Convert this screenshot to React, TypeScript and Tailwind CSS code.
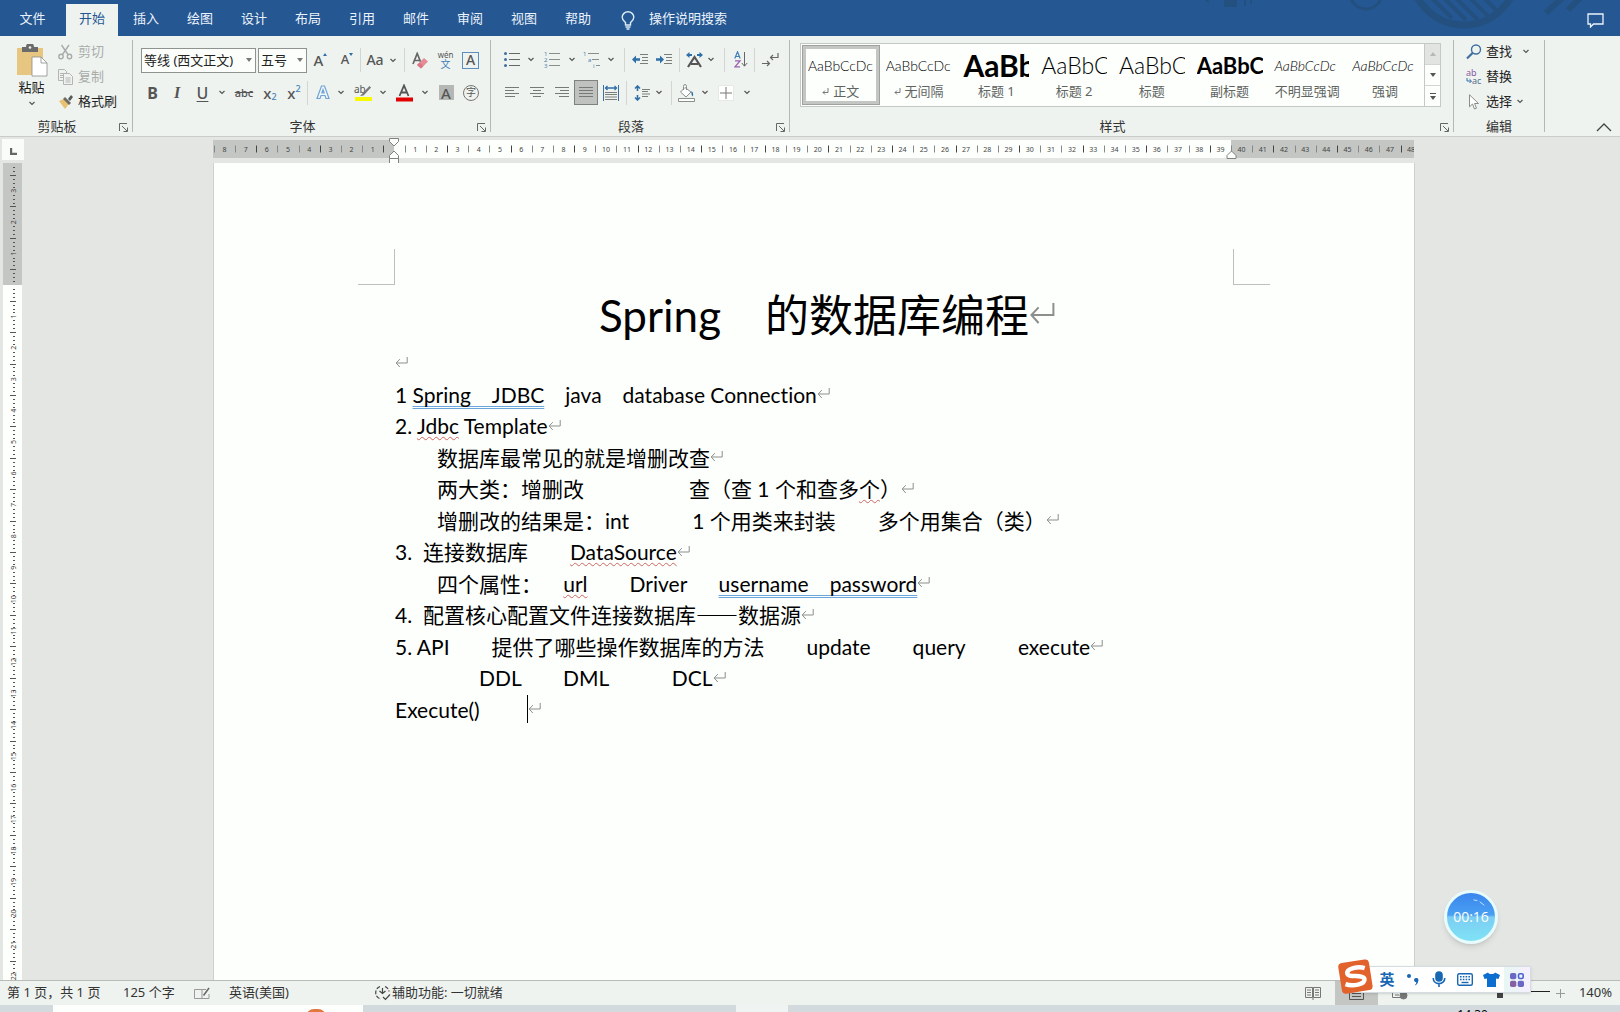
import React from 'react';
import clsx from 'clsx';

const UI_FONT = "font-['Noto_Sans','Noto_Sans_CJK_SC',sans-serif]";
const DOC_FONT = "font-['Lato','Noto_Sans_CJK_SC',sans-serif] [font-variant-ligatures:none]";

const tabs = ['开始', '插入', '绘图', '设计', '布局', '引用', '邮件', '审阅', '视图', '帮助'];

const styles = [
  { name: '正文', sample: 'AaBbCcDc', look: 'text-sm font-light', mark: true, active: true },
  { name: '无间隔', sample: 'AaBbCcDc', look: 'text-sm font-light', mark: true },
  { name: '标题 1', sample: 'AaBb', look: 'text-[30px] font-bold' },
  { name: '标题 2', sample: 'AaBbC', look: 'text-[23px] font-light' },
  { name: '标题', sample: 'AaBbC', look: 'text-[23px] font-light' },
  { name: '副标题', sample: 'AaBbC', look: 'text-[22px] font-bold' },
  { name: '不明显强调', sample: 'AaBbCcDc', look: 'text-sm font-light italic text-[#505450]' },
  { name: '强调', sample: 'AaBbCcDc', look: 'text-sm font-light italic' },
];

/* ---------- small shared pieces ---------- */

const Chevron = () => (
  <svg width="8" height="5" viewBox="0 0 8 5" fill="none" stroke="#555" strokeWidth="1.2">
    <path d="M1.5 1 4 3.5 6.5 1" />
  </svg>
);

const Drop: React.FC<{ label: string; className?: string }> = ({ label, className = 'w-3' }) => (
  <button aria-label={label} className={clsx('flex h-6 items-center justify-center', className)}>
    <Chevron />
  </button>
);

const Tool: React.FC<{ label: string; className: string; children: React.ReactNode }> = ({
  label,
  className,
  children,
}) => (
  <button aria-label={label} className={clsx('flex h-[25px] items-center justify-center', className)}>
    {children}
  </button>
);

const Sep: React.FC<{ className: string }> = ({ className }) => (
  <div className={clsx('h-6 w-px bg-[#d2d5d2]', className)} />
);

const GroupLine = () => <div className="my-1 w-px bg-[#b4b8b4]" />;

const Launcher: React.FC<{ label: string }> = ({ label }) => (
  <button aria-label={label} className="absolute right-1 bottom-1">
    <svg width="9" height="9" viewBox="0 0 9 9" fill="none" stroke="#666">
      <path d="M.5 8V.5H8M3 3l5 5M8.5 4.5v4h-4" />
    </svg>
  </button>
);

const Group: React.FC<{
  title: string;
  className?: string;
  labelClassName?: string;
  launcher?: boolean;
  children: React.ReactNode;
}> = ({ title, className, labelClassName, launcher = true, children }) => (
  <section aria-label={title} className={clsx('relative flex flex-col', className)}>
    <div className="flex-1">{children}</div>
    <div
      className={clsx('flex h-[18px] items-center justify-center text-[13px] text-[#333]', labelClassName)}
    >
      {title}
    </div>
    {launcher && <Launcher label={`${title}设置`} />}
  </section>
);

const Lines: React.FC<{ rows: [number, number][] }> = ({ rows }) => (
  <svg width="14" height="14" viewBox="0 0 14 14" stroke="#767a76">
    {rows.map(([a, b], i) => (
      <path key={i} d={`M${a} ${i * 3 + 1.5}H${b}`} />
    ))}
  </svg>
);

const Mark: React.FC<{ big?: boolean }> = ({ big }) => (
  <svg
    className={clsx('shrink-0', big ? '-mr-[26px] h-[30px] w-[26px]' : 'h-[14px] w-[13px]')}
    viewBox="0 0 13 14"
    fill="none"
    stroke="#8c8f8c"
    strokeWidth="1"
  >
    <path d="M12.2 1v6H1.2M4.8 3.2 1.2 7l3.6 4" />
  </svg>
);

/* ---------- title bar ---------- */

const TitleBar = () => (
  <header className="relative flex h-9 items-end overflow-hidden bg-[#255792] text-[13px] text-[#eaf3fb]">
    <svg
      className="absolute top-0 right-0"
      width="460"
      height="36"
      viewBox="0 0 460 36"
      fill="none"
      stroke="#24507f"
      strokeWidth="3"
    >
      <path d="M64 0h13v7H64z" fill="#24507f" stroke="none" />
      <path d="M85 0v6M91 0v4M46 0l3 2" strokeWidth="2" />
      <circle cx="206" cy="-7" r="16" />
      <circle cx="304" cy="-28" r="53" strokeWidth="7" />
      <path d="M268-6l24 24M280-6l26 26M292-6l26 26M306-6l22 22M320-6l16 16" strokeWidth="4" />
      <path d="M386 13 404-4M408 10 422-4" strokeWidth="6" />
    </svg>
    <button className="h-8 w-[65px] pb-0.5">文件</button>
    <nav className="flex">
      {tabs.map((tab, i) => (
        <button
          key={tab}
          className={clsx('mx-px h-8 w-[52px] pb-0.5', i === 0 && 'bg-[#eff3f0] text-[#255792]')}
        >
          {tab}
        </button>
      ))}
    </nav>
    <button className="ml-4 flex h-8 items-center gap-[14px]">
      <svg width="14" height="19" viewBox="0 0 14 19" fill="none" stroke="#dcecf8" strokeWidth="1.4">
        <path d="M4.5 14v-2.500C2.500 9.500 1.200 8.500 1.200 6.200a5.800 5.400 0 0 1 11.600 0c0 2.300-1.300 3.300-3.300 5.300V14zM4.500 16h5M5.500 18h3" />
      </svg>
      <span className="pb-0.5">操作说明搜索</span>
    </button>
    <button aria-label="批注" className="relative mr-4 mb-2 ml-auto">
      <svg width="17" height="15" viewBox="0 0 17 15" fill="none" stroke="#eaf3fb" strokeWidth="1.300">
        <path d="M1 1h15v10H6.500L3.500 14v-3H1z" />
      </svg>
    </button>
  </header>
);

/* ---------- ribbon ---------- */

const ClipboardGroup = () => (
  <Group title="剪贴板" className="w-[132px]" labelClassName="pr-[18px]">
    <div className="flex pt-[3px] text-[13px] whitespace-nowrap">
      <button className="flex w-[57px] shrink-0 flex-col items-center pt-[5px] pl-1.5 text-[#222]">
        <svg width="32" height="34" viewBox="0 0 32 34">
          <path d="M1 4h26v27H1z" fill="#e6c681" />
          <path d="M6 3h4a4 4 0 0 1 8 0h4v5H6z" fill="#6b6b6b" />
          <circle cx="14" cy="3.500" r="1.300" fill="#eff3f0" />
          <path d="M16 13h9l6 6v13H16z" fill="#fff" stroke="#8a8d8a" strokeWidth=".8" />
          <path d="M25 13v6h6" fill="none" stroke="#8a8d8a" strokeWidth=".8" />
        </svg>
        <span className="mt-px h-4 leading-4">粘贴</span>
        <span className="mt-1.5">
          <Chevron />
        </span>
      </button>
      <div>
        <button className="flex h-[25px] items-center gap-1 text-[#a9aca9]">
          <svg width="17" height="16" viewBox="0 0 17 16" fill="none" stroke="#a9aca9" strokeWidth="1.400">
            <path d="M4.500 1l6.500 9.500M12 1 5.500 10.500" />
            <circle cx="4" cy="12.500" r="2.200" />
            <circle cx="12.500" cy="12.500" r="2.200" />
          </svg>
          剪切
        </button>
        <button className="flex h-[25px] items-center gap-1 text-[#a9aca9]">
          <svg width="17" height="16" viewBox="0 0 17 16" fill="#eff3f0" stroke="#b2b5b2">
            <path d="M1.500.5h6l2 2v9h-8zM3 4.500h4M3 6.500h4M3 8.500h4" />
            <path d="M6.500 4.500h6l3 3v8h-9zM8.500 9h5M8.500 11h5M8.500 13h5" />
          </svg>
          复制
        </button>
        <button className="flex h-[25px] items-center gap-1 text-[#222]">
          <svg width="17" height="16" viewBox="0 0 17 16">
            <path d="M2 7l5-2 5 5-4 5z" fill="#e6c272" />
            <path d="M6 5l2-2 6 6-2 2z" fill="#6e6a60" />
            <path d="M11 5l3-4 2 2-3 4z" fill="#55595a" />
          </svg>
          格式刷
        </button>
      </div>
    </div>
  </Group>
);

const FontGroup = () => (
  <Group title="字体" className="w-[357px] pl-2" labelClassName="pr-[26px]">
    <div className="flex flex-col gap-[7px] pt-[11px] text-[#555]">
      <div className="flex items-center">
        <div className="relative mr-0.5">
          <select
            aria-label="字体"
            className="h-[25px] w-[115px] appearance-none border border-[#8f938f] bg-[#fcfefc] pl-0.5 text-[13px] text-[#222]"
          >
            <option>等线 (西文正文)</option>
          </select>
          <svg className="pointer-events-none absolute top-[11px] right-1" width="6" height="4">
            <path d="M0 0h6L3 4z" fill="#777" />
          </svg>
        </div>
        <div className="relative">
          <select
            aria-label="字号"
            className="h-[25px] w-[49px] appearance-none border border-[#8f938f] bg-[#fcfefc] pl-0.5 text-[13px] text-[#222]"
          >
            <option>五号</option>
          </select>
          <svg className="pointer-events-none absolute top-[11px] right-1" width="6" height="4">
            <path d="M0 0h6L3 4z" fill="#777" />
          </svg>
        </div>
        <Tool label="增大字号" className="w-[27px] text-[15px] font-medium">
          A
          <svg className="mb-3" width="4" height="3">
            <path d="M0 3 2 0l2 3z" fill="#2f6fa8" />
          </svg>
        </Tool>
        <Tool label="减小字号" className="w-[26px] text-[13px] font-medium">
          A
          <svg className="mb-3" width="4" height="3">
            <path d="M0 0h4L2 3z" fill="#2f6fa8" />
          </svg>
        </Tool>
        <Sep className="mr-0.5" />
        <Tool label="更改大小写" className="w-6 text-sm font-medium">
          Aa
        </Tool>
        <Drop label="大小写选项" />
        <Sep className="mr-[3px] ml-[5px]" />
        <Tool label="清除所有格式" className="w-[25px]">
          <svg width="17" height="17" viewBox="0 0 17 17">
            <path d="M1 12 5.200 1.500 9.500 12M2.500 8.500H8" fill="none" stroke="#666" strokeWidth="1.700" />
            <path d="M5 13l7-7 4 3.500-7 7z" fill="#e58a97" />
            <path d="M5 13l2.500-2.500 4 3.500L9 16.500z" fill="#d97585" />
          </svg>
        </Tool>
        <Tool label="拼音指南" className="w-[25px]">
          <span className="flex flex-col items-center">
            <span className="text-[8px] leading-[8px]">wén</span>
            <span className="text-[10px] leading-[10px] text-[#3e7fb8]">文</span>
          </span>
        </Tool>
        <Tool label="字符边框" className="w-[25px]">
          <span className="flex h-[17px] w-[17px] items-center justify-center border border-[#5b8fc0] text-sm leading-4 font-medium">
            A
          </span>
        </Tool>
      </div>
      <div className="flex items-center text-base">
        <Tool label="加粗" className="w-[23px] font-bold">
          B
        </Tool>
        <Tool label="倾斜" className="w-[26px] font-['Liberation_Serif',serif] font-bold italic">
          I
        </Tool>
        <Tool label="下划线" className="w-[25px] font-medium underline underline-offset-2">
          U
        </Tool>
        <Drop label="下划线样式" className="w-3.5" />
        <Tool label="删除线" className="w-[30px] text-[11px] font-medium line-through">
          abc
        </Tool>
        <Tool label="下标" className="w-[22px] text-[15px] font-medium">
          x<span className="mt-2 text-[9px] text-[#3e7fb8]">2</span>
        </Tool>
        <Tool label="上标" className="w-[26px] text-[15px] font-medium">
          x<span className="mb-2 text-[9px] text-[#3e7fb8]">2</span>
        </Tool>
        <Sep className="mr-[3px]" />
        <Tool label="文本效果" className="w-6">
          <svg width="14" height="15" viewBox="0 0 14 15" fill="#f5f9fc" stroke="#6fa3d3" strokeWidth="1.200">
            <path d="M1 13.500 5.500 1h3L13 13.500h-3L9 10.500H5L4 13.500zM5.800 8h2.400L7 4.500z" />
          </svg>
        </Tool>
        <Drop label="文本效果选项" />
        <Tool label="突出显示" className="w-8">
          <svg width="18" height="18" viewBox="0 0 18 18">
            <text x="0" y="9" fontSize="10" fill="#555">
              ab
            </text>
            <path d="M15.500 2 17 3.500 9.500 11.500 6 12z" fill="#777" />
            <path d="M1 13h17v4H1z" fill="#f8f800" />
          </svg>
        </Tool>
        <Drop label="突出显示颜色" className="w-2" />
        <Tool label="字体颜色" className="w-[34px]">
          <svg width="18" height="18" viewBox="0 0 18 18">
            <path d="M4.500 12 9 1.500 13.500 12M6 8.500h6" fill="none" stroke="#555" strokeWidth="1.800" />
            <path d="M1 13.500h17v4H1z" fill="#e00000" />
          </svg>
        </Tool>
        <Drop label="字体颜色选项" className="w-2" />
        <Tool label="字符底纹" className="w-[34px] font-medium">
          <span className="flex h-[15px] w-[15px] items-center justify-center bg-[#b4b7b4] text-[15px]">A</span>
        </Tool>
        <Tool label="带圈字符" className="w-4">
          <span className="flex h-4 w-4 shrink-0 items-center justify-center rounded-full border border-[#777] text-[10px]">
            字
          </span>
        </Tool>
      </div>
    </div>
  </Group>
);

const ParagraphGroup = () => (
  <Group title="段落" className="w-[298px] pl-2" labelClassName="pr-[26px]">
    <div className="flex flex-col gap-2 pt-[11px] text-[#555]">
      <div className="flex items-center">
        <Tool label="项目符号" className="w-[26px]">
          <svg width="16" height="17" viewBox="0 0 16 17" stroke="#666">
            <path d="M5 2.500h11M5 8.500h11M5 14.500h11" />
            <g fill="#3e6f9e" stroke="none">
              <circle cx="1.500" cy="2.500" r="1.500" />
              <circle cx="1.500" cy="8.500" r="1.500" />
              <circle cx="1.500" cy="14.500" r="1.500" />
            </g>
          </svg>
        </Tool>
        <Drop label="项目符号库" />
        <Tool label="编号" className="w-[29px]">
          <svg width="16" height="17" viewBox="0 0 16 17">
            <path d="M5 2.500h11M5 8.500h11M5 14.500h11" stroke="#8a8e8a" />
            <g fill="#4a7fae" fontSize="6">
              <text x="0" y="5">1</text>
              <text x="0" y="11">2</text>
              <text x="0" y="17">3</text>
            </g>
          </svg>
        </Tool>
        <Drop label="编号库" />
        <Tool label="多级列表" className="w-[27px]">
          <svg width="17" height="17" viewBox="0 0 17 17">
            <path d="M5 2.500h11M9 8.500h7M13 14.500h4" stroke="#8a8e8a" />
            <g fill="#4a7fae" fontSize="6">
              <text x="0" y="5">1</text>
              <text x="5" y="11">a</text>
              <text x="10" y="17">i</text>
            </g>
          </svg>
        </Tool>
        <Drop label="列表库" />
        <Sep className="mr-[3px] ml-[7px]" />
        <Tool label="减少缩进量" className="w-6">
          <svg width="16" height="11" viewBox="0 0 16 11">
            <path d="M8 .5h8M10 3.500h6M10 6.500h6M8 9.500h8" stroke="#7a7e7a" />
            <path d="M0 5.500 4 1.500v2.800h4v2.400H4v2.800z" fill="#2f6fa8" />
          </svg>
        </Tool>
        <Tool label="增加缩进量" className="w-6">
          <svg width="16" height="11" viewBox="0 0 16 11">
            <path d="M8 .5h8M10 3.500h6M10 6.500h6M8 9.500h8" stroke="#7a7e7a" />
            <path d="M8 5.500 4 1.500v2.800H0v2.400h4v2.800z" fill="#2f6fa8" />
          </svg>
        </Tool>
        <Sep className="mx-[3px]" />
        <Tool label="中文版式" className="w-[22px]">
          <svg width="17" height="16" viewBox="0 0 17 16">
            <path d="M2 15 8.500 5 15 15M5 12h7" fill="none" stroke="#555" strokeWidth="2.200" />
            <path d="M0 3l3.500-3v2H6v2H3.500v2zM17 3l-3.500-3v2H11v2h2.500v2z" fill="#2f6fa8" />
          </svg>
        </Tool>
        <Drop label="中文版式选项" />
        <Sep className="mr-[3px] ml-[7px]" />
        <Tool label="排序" className="w-[25px]">
          <svg width="14" height="17" viewBox="0 0 14 17" fill="none">
            <path d="M.8 7.500 3.500.8l2.700 6.700M1.800 5.500h3.400" stroke="#3e7fb8" strokeWidth="1.200" />
            <path d="M1 9.800h5L1 15.800h5" stroke="#9a62ae" strokeWidth="1.300" />
            <path d="M10.500 1v14M7.800 12l2.700 3.200 2.700-3.200" stroke="#666" />
          </svg>
        </Tool>
        <Sep className="mr-[3px] ml-px" />
        <Tool label="显示编辑标记" className="w-6">
          <svg width="17" height="15" viewBox="0 0 17 15" fill="none" stroke="#666" strokeWidth="1.200">
            <path d="M16 1v4.500H8.500M11 3 8.500 5.500 11 8M0 11.500h7.500M5 9l2.500 2.500L5 14" />
          </svg>
        </Tool>
      </div>
      <div className="flex items-center pl-px">
        <Tool label="左对齐" className="w-6">
          <Lines rows={[[0, 14], [0, 9], [0, 14], [0, 10]]} />
        </Tool>
        <Tool label="居中" className="w-[25px]">
          <Lines rows={[[0, 14], [3, 11], [0, 14], [3, 11]]} />
        </Tool>
        <Tool label="右对齐" className="w-[25px]">
          <Lines rows={[[0, 14], [5, 14], [0, 14], [4, 14]]} />
        </Tool>
        <Tool label="两端对齐" className="w-6 border border-[#7f837f] bg-[#bfc2bf]">
          <Lines rows={[[0, 14], [0, 14], [0, 14], [0, 14]]} />
        </Tool>
        <Tool label="分散对齐" className="w-[26px]">
          <svg width="16" height="16" viewBox="0 0 16 16" fill="none">
            <path d="M.5 0v16M15.500 0v16" stroke="#3e6f9e" />
            <path d="M2 3h12M4.500 1 2.500 3l2 2M11.500 1l2 2-2 2" stroke="#2f6fa8" strokeWidth="1.300" />
            <path d="M2 7.500h12M2 9.500h12M2 12h12M2 14.500h12" stroke="#7a7e7a" />
          </svg>
        </Tool>
        <Sep className="mr-[3px] ml-0.5" />
        <Tool label="行距" className="w-[23px]">
          <svg width="16" height="16" viewBox="0 0 16 16" fill="none">
            <path d="M3.500 1v5M1 3.500 3.500 1 6 3.500M3.500 15v-5M1 12.500 3.500 15 6 12.500" stroke="#2f6fa8" strokeWidth="1.600" />
            <path d="M8 4.500h8M8 6.500h6M8 9h8M8 11.500h6" stroke="#7a7e7a" />
          </svg>
        </Tool>
        <Drop label="行距选项" />
        <Sep className="mr-0.5 ml-1.5" />
        <Tool label="底纹" className="w-[25px]">
          <svg width="17" height="18" viewBox="0 0 17 18" fill="#fff" stroke="#8a8e8a">
            <path d="M7 3.500 13 8l-5 5-5.500-5zM5.500 6V2.500a1.500 2 0 0 1 3 0V6" />
            <path d="M13.500 7c2 1.500 2 4 1 5.500-.8-1-1.500-3-1-5.500z" fill="#2f6fa8" stroke="none" />
            <path d="M.5 14.500h16v3H.5z" />
          </svg>
        </Tool>
        <Drop label="底纹颜色" />
        <Tool label="边框" className="w-[30px]">
          <svg width="16" height="16" viewBox="0 0 16 16">
            <path d="M0 0h16v16H0z" fill="#fff" />
            <path d="M8 2v12M2 8h12" stroke="#777" />
            <path d="M.5.5h15v15H.5z" fill="none" stroke="#cfd2cf" strokeDasharray="1 1" />
          </svg>
        </Tool>
        <Drop label="边框选项" />
      </div>
    </div>
  </Group>
);

const StylesGroup = () => (
  <Group title="样式" className="w-[663px] pr-3 pl-[10px]" labelClassName="pr-4">
    <div className="pt-[7px]">
      <div className="flex h-16 border border-[#c5c9c5] bg-[#fdfffd]">
        <div className="flex flex-1 pt-px pl-px">
          {styles.map((s) => (
            <button
              key={s.name}
              className={clsx(
                'flex h-[60px] w-0 flex-1 flex-col items-center border-4',
                s.active ? 'border-[#c3c6c3] outline outline-1 -outline-offset-1 outline-[#9fa29f]' : 'border-transparent',
              )}
            >
              <span
                className={clsx(
                  'h-[33px] w-[66px] overflow-hidden text-left leading-[33px] whitespace-nowrap text-black',
                  DOC_FONT,
                  s.look,
                )}
              >
                {s.sample}
              </span>
              <span className="flex h-[18px] items-center gap-1 text-[13px] leading-[18px] whitespace-nowrap text-[#606460]">
                {s.mark && (
                  <svg width="7" height="7" viewBox="0 0 7 7" fill="none" stroke="#777">
                    <path d="M6 0v4.500H1M3 2.500l-2 2 2 2" />
                  </svg>
                )}
                {s.name}
              </span>
            </button>
          ))}
        </div>
        <div className="flex w-4 flex-col divide-y divide-[#d2d5d2] border-l border-[#c5c9c5]">
          <button aria-label="上一行" className="flex flex-1 items-center justify-center bg-[#e2e4e2]">
            <svg width="6" height="4">
              <path d="M0 4 3 0l3 4z" fill="#b5b8b5" />
            </svg>
          </button>
          <button aria-label="下一行" className="flex flex-1 items-center justify-center">
            <svg width="6" height="4">
              <path d="M0 0h6L3 4z" fill="#555" />
            </svg>
          </button>
          <button aria-label="其他样式" className="flex flex-1 items-center justify-center">
            <svg width="6" height="7">
              <path d="M0 0h6v1H0zM0 3h6L3 7z" fill="#555" />
            </svg>
          </button>
        </div>
      </div>
    </div>
  </Group>
);

const EditGroup = () => (
  <Group title="编辑" className="w-[90px]" launcher={false}>
    <div className="pt-[3px] pl-3 text-[13px] text-[#222]">
      <button className="flex h-[25px] items-center gap-1">
        <svg width="16" height="16" viewBox="0 0 16 16" fill="none" stroke="#3e6f9e" strokeWidth="1.400">
          <circle cx="10" cy="5.500" r="4.500" />
          <path d="M6.800 8.800 1 14.500" strokeWidth="2.200" />
        </svg>
        查找
        <span className="pl-1.5">
          <Chevron />
        </span>
      </button>
      <button className="flex h-[25px] items-center gap-1">
        <svg width="16" height="16" viewBox="0 0 16 16">
          <text x="0" y="7" fontSize="9" fill="#8a5aa5">
            ab
          </text>
          <text x="6" y="15" fontSize="9" fill="#55708c">
            ac
          </text>
          <path d="M1 9v3h4M3.500 10.200 5.500 12l-2 2" fill="none" stroke="#2f6fa8" />
        </svg>
        替换
      </button>
      <button className="flex h-[25px] items-center gap-1">
        <svg width="16" height="16" viewBox="0 0 16 16" fill="#fff" stroke="#8a8e8a">
          <path d="M3.500.8v12l3-2.800 2 5 2-.8-2-4.700h4z" />
        </svg>
        选择
        <Chevron />
      </button>
    </div>
  </Group>
);

const Ribbon = () => (
  <div className="flex h-[101px] border-b border-[#c9ccc9] bg-[#eff3f0]">
    <ClipboardGroup />
    <GroupLine />
    <FontGroup />
    <GroupLine />
    <ParagraphGroup />
    <GroupLine />
    <StylesGroup />
    <GroupLine />
    <EditGroup />
    <GroupLine />
    <button aria-label="折叠功能区" className="mr-2 mb-1 ml-auto self-end">
      <svg width="16" height="10" viewBox="0 0 16 10" fill="none" stroke="#444" strokeWidth="1.300">
        <path d="M1 9 8 2l7 7" />
      </svg>
    </button>
  </div>
);

/* ---------- rulers ---------- */

const STEP = 21.19;
const ZERO = 181;

const HorizontalRuler = () => {
  const units = Array.from({ length: 57 }, (_, i) => i - 8);
  return (
    <svg className="w-[1201px] shrink-0" height="26" viewBox="0 0 1201 26">
      <path d="M0 3h1201v18H0z" fill="#c3c6c3" />
      <path d="M181 3h837v18H181z" fill="#fdfffd" />
      {units.map((n) => (
        <React.Fragment key={n}>
          {n !== 0 && (
            <text x={ZERO + n * STEP} y="14.500" fontSize="7" textAnchor="middle" fill="#444">
              {Math.abs(n)}
            </text>
          )}
          <path
            d={`M${Math.round(ZERO + (n - 0.5) * STEP) + 0.5} 8.500v7`}
            stroke={n % 3 === 0 ? '#444' : '#888'}
          />
        </React.Fragment>
      ))}
      <g fill="#fdfffd" stroke="#7f837f">
        <path d="M177 1.500h8.500v3L181 9l-4.500-4.500v-3zM181 14l4.500 4.500v3h-9v-3zM176.500 21.500h9v5h-9z" />
        <path d="M1018.500 14l4.500 4.500v3h-9v-3z" />
      </g>
    </svg>
  );
};

const VSTEP = 31.42;
const VZERO = 122;

const VerticalRuler = () => {
  const ticks = Array.from({ length: 212 }, (_, i) => i - 31);
  return (
    <svg className="ml-[3px] w-[19px] shrink-0 self-start" height="1200" viewBox="0 0 19 1200">
      <path d="M0 0h19v1200H0z" fill="#fdfffd" />
      <path d="M0 0h19v122H0z" fill="#c3c6c3" />
      {ticks.map((t) => {
        const y = VZERO + (t * VSTEP) / 8;
        if (y < 2 || t === 0) return null;
        if (t % 8 === 0) {
          return (
            <text
              key={t}
              fontSize="7"
              textAnchor="middle"
              fill="#444"
              transform={`translate(13 ${y}) rotate(-90)`}
            >
              {Math.abs(t / 8)}
            </text>
          );
        }
        const row = Math.round(y) + 0.5;
        return <path key={t} d={t % 4 === 0 ? `M7 ${row}h6` : `M10 ${row}h2`} stroke="#555" />;
      })}
    </svg>
  );
};

/* ---------- document ---------- */

const Wavy: React.FC<{ children: React.ReactNode }> = ({ children }) => (
  <span className="underline decoration-[#d0655f] decoration-wavy decoration-1 underline-offset-2">{children}</span>
);

const Grammar: React.FC<{ children: React.ReactNode }> = ({ children }) => (
  <span className="underline decoration-[#6aa5dc] decoration-double decoration-1 underline-offset-[3px] [text-decoration-skip-ink:none]">
    {children}
  </span>
);

const lines: React.ReactNode[] = [
  <>1 <Grammar>Spring　JDBC</Grammar>　java　database Connection</>,
  <>2. <Wavy>Jdbc</Wavy> Template</>,
  <>　　数据库最常见的就是增删改查</>,
  <>　　两大类：增删改　　　　　查（查 1 个和查多<Wavy>个</Wavy>）</>,
  <>　　增删改的结果是：int　　　1 个用类来封装　　多个用集合（类）</>,
  <>3.  连接数据库　　<Wavy>DataSource</Wavy></>,
  <>　　四个属性：　  <Wavy>url</Wavy>　　Driver　  <Grammar>username　password</Grammar></>,
  <>4.  配置核心配置文件连接数据库<span className="font-['Noto_Sans_CJK_SC',sans-serif]">——</span>数据源</>,
  <>5. API　　提供了哪些操作数据库的方法　　update　　query　　  execute</>,
  <>　　　　DDL　　DML　　　DCL</>,
];

const Page = () => (
  <article className="w-[1200px] shrink-0 bg-[#fdfffd] pt-[86px] text-black outline outline-1 outline-[#cdd0cd]">
    <div className="flex justify-between px-36">
      <div className="h-9 w-[37px] border-r border-b border-[#bdc0bd]" />
      <div className="h-9 w-[37px] border-b border-l border-[#bdc0bd]" />
    </div>
    <div className={clsx('px-[181px]', DOC_FONT)} lang="zh-CN">
      <h1 className="flex h-[62px] items-center justify-center pb-0.5 text-[44px] whitespace-pre">
        Spring　的数据库编程
        <Mark big />
      </h1>
      <div className="grid h-[378px] auto-rows-fr">
        <p className="flex items-center">
          <Mark />
        </p>
        {lines.map((line, i) => (
          <p key={i} className="flex items-center text-[21px] leading-[31px] whitespace-pre">
            <span>{line}</span>
            <Mark />
          </p>
        ))}
        <p className="flex items-center text-[21px] leading-[31px] whitespace-pre">
          <span>Execute()　　 </span>
          <span className="h-7 w-px bg-black" />
          <Mark />
        </p>
      </div>
    </div>
  </article>
);

/* ---------- status bar and floating tools ---------- */

const StatusBar = () => (
  <footer className="flex h-[25px] shrink-0 items-center border-t border-[#b9bcb9] bg-[#eff3f0] pr-2 pl-[7px] text-[13px] whitespace-pre text-[#333]">
    <span className="w-[116px] pb-px">第 1 页，共 1 页</span>
    <span className="w-[71px] pb-px">125 个字</span>
    <svg width="16" height="13" viewBox="0 0 16 13" fill="none" stroke="#999">
      <path d="M8 2.500H.5v9H8zM8 2.500h4M8 11.500h7V7" />
      <path d="M15 1 9.500 8.500" stroke="#666" strokeWidth="1.500" />
    </svg>
    <span className="ml-[19px] w-[146px] pb-px">英语(美国)</span>
    <svg width="16" height="16" viewBox="0 0 16 16" fill="none" stroke="#444" strokeWidth="1.200">
      <path d="M5 1.500a6.500 6.500 0 0 0 1 12.500M10 1.500a6.500 6.500 0 0 1 4 5" strokeDasharray="4 1.500" />
      <path d="M7.500 3v5M4.500 6l3 2.500 3-2.500M8 12l2.500 2.500L15 9.500" />
    </svg>
    <span className="pb-px pl-px">辅助功能: 一切就绪</span>
    <div className="ml-auto flex h-full items-center">
      <button aria-label="阅读视图" className="mr-[14px]">
        <svg width="16" height="14" viewBox="0 0 16 14" fill="none" stroke="#777">
          <path d="M.5 1.500h7v10h-7zM8.500 1.500h7v10h-7zM8 1v13M2 4h4M2 6.500h4M2 9h4M10 4h4M10 6.500h4M10 9h4" />
        </svg>
      </button>
      <button aria-label="页面视图" className="flex h-full w-[43px] items-center justify-center bg-[#c3c6c3]">
        <svg width="15" height="13" viewBox="0 0 15 13" fill="none" stroke="#555">
          <path d="M.5.5h14v12H.5zM3 3.500h9M3 6.500h9M3 9.500h9" />
        </svg>
      </button>
      <button aria-label="Web 版式" className="mr-3 ml-[14px]">
        <svg width="16" height="14" viewBox="0 0 16 14" fill="none" stroke="#777">
          <path d="M.5.5h12v11H.5zM3 3.500h7M3 6.500h5M3 9h4" />
          <circle cx="11.500" cy="9.500" r="3.500" fill="#777" />
        </svg>
      </button>
      <input
        type="range"
        aria-label="缩放"
        min={0}
        max={100}
        defaultValue={62}
        className="mb-1 h-[14px] w-[130px] appearance-none bg-[linear-gradient(#222,#222)] bg-[length:100%_1px] bg-center bg-no-repeat [&::-webkit-slider-thumb]:h-[14px] [&::-webkit-slider-thumb]:w-1.5 [&::-webkit-slider-thumb]:appearance-none [&::-webkit-slider-thumb]:bg-[#444]"
      />
      <button aria-label="放大" className="mr-[13px] ml-[6px]">
        <svg width="9" height="9" stroke="#999">
          <path d="M4.500 0v9M0 4.500h9" />
        </svg>
      </button>
      <span className="w-[34px] pb-px text-right">140%</span>
    </div>
  </footer>
);

const Taskbar = () => (
  <div className="flex h-[7px] shrink-0 overflow-hidden bg-[#d2dade]">
    <div className="ml-[53px] flex w-[310px] justify-end bg-[#fdfffd] pr-[37px]">
      <div className="mt-1 h-4 w-5 rounded-full bg-[#e07840]" />
    </div>
    <div className="ml-[373px] w-[52px] bg-[#eff3f2]" />
    <span className="mt-1 mr-[132px] ml-auto text-xs leading-3 text-black">14:30</span>
  </div>
);

const Timer = () => (
  <div className="absolute right-[122px] bottom-[68px] flex h-[54px] w-[54px] items-center justify-center rounded-full border-[3px] border-[#e8fbfd] bg-[linear-gradient(#3a86ee_0%,#4aa0f2_46%,#7ccdf3_50%,#7ee3f5_100%)] font-['Open_Sans',sans-serif] text-sm text-white shadow-md">
    00:16
    <svg className="absolute top-1 right-2" width="14" height="10" fill="none" stroke="#c5e2ff" strokeLinecap="round">
      <path d="M1 3l3 .5M7 5l4 3" />
    </svg>
  </div>
);

const InputMethodBar = () => (
  <div className="absolute right-[89px] bottom-[19px] flex h-[27px] items-center border border-[#d5dde2] bg-white pl-[23px] text-[#1767b3] shadow">
    <svg className="absolute bottom-[-3px] left-[-13px]" width="36" height="36" viewBox="0 0 36 36">
      <g transform="rotate(-9 18 18)">
        <rect x="2" y="2" width="31" height="31" rx="4" fill="#e2622b" />
        <path
          d="M28 10.500C22 7.500 9.500 8 10 13.500c.4 4.500 16 2.500 16 8 0 5.500-13 5.500-19.500 2"
          fill="none"
          stroke="#fff"
          strokeWidth="4.500"
        />
      </g>
    </svg>
    <button className="w-[26px] text-[15px] font-bold">英</button>
    <button aria-label="中英文标点" className="flex w-[26px] justify-center">
      <svg width="14" height="13" viewBox="0 0 14 13" fill="currentColor">
        <circle cx="3" cy="3" r="2" />
        <path d="M8 7a2.200 2.200 0 1 1 4.300.8C12 10.500 10.500 12 8.500 12.500c1-1 1.800-2 1.800-3.300C9 9.200 8 8.200 8 7z" />
      </svg>
    </button>
    <button aria-label="语音" className="flex w-[26px] justify-center">
      <svg width="14" height="17" viewBox="0 0 14 17" fill="none" stroke="currentColor" strokeWidth="1.600">
        <rect x="4" y="1" width="6" height="9" rx="3" fill="currentColor" />
        <path d="M1.200 7c0 7.500 11.600 7.500 11.600 0M7 12.500V16" />
      </svg>
    </button>
    <button aria-label="软键盘" className="flex w-[26px] justify-center">
      <svg width="16" height="13" viewBox="0 0 16 13" fill="none" stroke="currentColor" strokeWidth="1.400">
        <rect x=".7" y=".7" width="14.600" height="11.600" rx="1.500" />
        <path d="M3 3.800h10M3 6.500h10" strokeWidth="1.600" strokeDasharray="1.600 1.200" />
        <path d="M4.500 9.500h7" />
      </svg>
    </button>
    <button aria-label="皮肤" className="flex w-[26px] justify-center">
      <svg width="17" height="15" viewBox="0 0 17 15" fill="#0c6fd0">
        <path d="M5 .5c1 2 6 2 7 0L17 3l-1.500 4-2.500-.5V15H4V6.500L1.500 7 0 3z" />
      </svg>
    </button>
    <button aria-label="工具箱" className="flex h-full w-[26px] items-center justify-center bg-[linear-gradient(90deg,#e8f6f4,#f6f0ff)]">
      <svg width="14" height="14" viewBox="0 0 14 14" fill="#6a68c4">
        <rect width="6.300" height="6.300" rx="1.800" />
        <rect y="7.700" width="6.300" height="6.300" rx="1.800" fill="#85629f" />
        <rect x="7.700" y="7.700" width="6.300" height="6.300" rx="1.800" />
        <rect x="8.500" y=".8" width="4.700" height="4.700" rx="1.500" fill="none" stroke="#4a63cf" strokeWidth="1.600" />
      </svg>
    </button>
  </div>
);

const App: React.FC = () => (
  <div className={clsx('relative flex h-screen flex-col overflow-hidden bg-[#e4e6e4]', UI_FONT)}>
    <TitleBar />
    <Ribbon />
    <div className="flex h-[26px] shrink-0">
      <div className="mt-0.5 ml-0.5 flex h-[21px] w-[22px] items-center justify-center bg-[#fafcfa]">
        <svg width="7" height="7" className="mt-1">
          <path d="M1 0v6h6" fill="none" stroke="#666" strokeWidth="2.400" />
        </svg>
      </div>
      <div className="flex flex-1 justify-center overflow-hidden pr-[17px]">
        <HorizontalRuler />
      </div>
    </div>
    <main className="flex min-h-0 flex-1 overflow-hidden">
      <VerticalRuler />
      <div className="flex flex-1 justify-center pr-4 pl-0.5">
        <Page />
      </div>
    </main>
    <StatusBar />
    <Taskbar />
    <Timer />
    <InputMethodBar />
  </div>
);

export default App;
